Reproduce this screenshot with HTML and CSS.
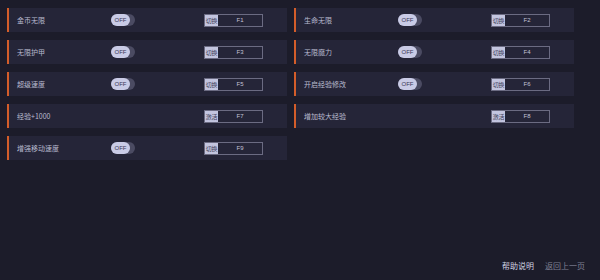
FILE: index.html
```html
<!DOCTYPE html>
<html lang="zh-CN">
<head>
<meta charset="utf-8">
<link rel="stylesheet" href="styles.css">
</head>
<body>
<div class="page">
  <div class="grid">
    <div class="card"><span class="label">金币无限</span><span class="toggle"><span class="knob">OFF</span></span><span class="key"><span class="tag">切换</span><span class="code">F1</span></span></div>
    <div class="card"><span class="label">生命无限</span><span class="toggle"><span class="knob">OFF</span></span><span class="key"><span class="tag">切换</span><span class="code">F2</span></span></div>
    <div class="card"><span class="label">无限护甲</span><span class="toggle"><span class="knob">OFF</span></span><span class="key"><span class="tag">切换</span><span class="code">F3</span></span></div>
    <div class="card"><span class="label">无限魔力</span><span class="toggle"><span class="knob">OFF</span></span><span class="key"><span class="tag">切换</span><span class="code">F4</span></span></div>
    <div class="card"><span class="label">超级速度</span><span class="toggle"><span class="knob">OFF</span></span><span class="key"><span class="tag">切换</span><span class="code">F5</span></span></div>
    <div class="card"><span class="label">开启经验修改</span><span class="toggle"><span class="knob">OFF</span></span><span class="key"><span class="tag">切换</span><span class="code">F6</span></span></div>
    <div class="card"><span class="label">经验+1000</span><span class="empty"></span><span class="key"><span class="tag">激活</span><span class="code">F7</span></span></div>
    <div class="card"><span class="label">增加较大经验</span><span class="empty"></span><span class="key"><span class="tag">激活</span><span class="code">F8</span></span></div>
    <div class="card"><span class="label">增强移动速度</span><span class="toggle"><span class="knob">OFF</span></span><span class="key"><span class="tag">切换</span><span class="code">F9</span></span></div>
  </div>
  <div class="footer">
    <span class="link help">帮助说明</span>
    <span class="link back">返回上一页</span>
  </div>
</div>
</body>
</html>
```

FILE: styles.css
```css
html, body {
  margin: 0;
  padding: 0;
  background: #1c1c2a;
  font-family: "Noto Sans CJK SC", "Noto Sans", sans-serif;
}

.page {
  width: 600px;
  height: 280px;
  display: flex;
  flex-direction: column;
  box-sizing: border-box;
  padding: 8px 0 0 7px;
}

.grid {
  display: grid;
  grid-template-columns: 280px 280px;
  column-gap: 7px;
  row-gap: 8px;
}

.card {
  height: 24px;
  box-sizing: border-box;
  background: #252538;
  border-left: 2px solid #d35d2a;
  padding-left: 8px;
  display: grid;
  grid-template-columns: 94px 93px 59px;
  align-items: center;
}

.label {
  font-size: 7px;
  color: #b9bbcf;
  white-space: nowrap;
}

.toggle {
  width: 24px;
  height: 12px;
  border-radius: 6px;
  background: #4b4b62;
  display: flex;
  align-items: center;
}

.knob {
  width: 19px;
  height: 12px;
  border-radius: 6px;
  background: #c9cbe6;
  color: #3a3a56;
  font-family: "Liberation Sans", sans-serif;
  font-size: 6px;
  display: flex;
  align-items: center;
  justify-content: center;
}

.key {
  height: 13px;
  box-sizing: border-box;
  border: 1px solid #6b6b82;
  display: flex;
  align-items: stretch;
}

.tag {
  width: 13px;
  background: #c3c5df;
  color: #3a3a55;
  font-size: 6px;
  letter-spacing: -0.3px;
  display: flex;
  align-items: center;
  justify-content: center;
  white-space: nowrap;
  overflow: hidden;
}

.code {
  flex: 1;
  color: #c2c4d6;
  font-family: "Liberation Sans", sans-serif;
  font-size: 6px;
  display: flex;
  align-items: center;
  justify-content: center;
}

.footer {
  margin-top: auto;
  display: flex;
  justify-content: flex-end;
  gap: 11px;
  padding: 0 15px 9px 0;
}

.link {
  font-size: 8px;
  line-height: 10px;
}

.help {
  color: #d0d2e2;
}

.back {
  color: #7e8094;
}
```
